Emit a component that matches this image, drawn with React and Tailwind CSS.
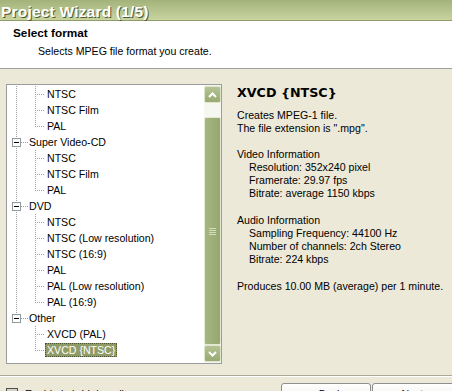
import React from "react";

const rows = [
  { t: "NTSC", kind: "child", root: "full", last: false },
  { t: "NTSC Film", kind: "child", root: "full", last: false },
  { t: "PAL", kind: "child", root: "full", last: true },
  { t: "Super Video-CD", kind: "parent", last: false },
  { t: "NTSC", kind: "child", root: "full", last: false },
  { t: "NTSC Film", kind: "child", root: "full", last: false },
  { t: "PAL", kind: "child", root: "full", last: true },
  { t: "DVD", kind: "parent", last: false },
  { t: "NTSC", kind: "child", root: "full", last: false },
  { t: "NTSC (Low resolution)", kind: "child", root: "full", last: false },
  { t: "NTSC (16:9)", kind: "child", root: "full", last: false },
  { t: "PAL", kind: "child", root: "full", last: false },
  { t: "PAL (Low resolution)", kind: "child", root: "full", last: false },
  { t: "PAL (16:9)", kind: "child", root: "full", last: true },
  { t: "Other", kind: "parent", last: true },
  { t: "XVCD (PAL)", kind: "child", root: "none", last: false },
  { t: "XVCD {NTSC}", kind: "child", root: "none", last: true, sel: true },
];

const DOT = "#a0a0a0";

function ChildLines({ root, last }) {
  return (
    <svg width="38" height="16" className="shrink-0" shapeRendering="crispEdges">
      {root === "full" && (
        <line x1="9.5" y1="0" x2="9.5" y2="16" stroke={DOT} strokeDasharray="1 1" />
      )}
      <line x1="28.5" y1="0" x2="28.5" y2={last ? 9 : 16} stroke={DOT} strokeDasharray="1 1" />
      <line x1="30" y1="8.5" x2="38" y2="8.5" stroke={DOT} strokeDasharray="1 1" />
    </svg>
  );
}

function ParentLines({ last }) {
  return (
    <svg width="21" height="16" className="shrink-0" shapeRendering="crispEdges">
      <line x1="9.5" y1="0" x2="9.5" y2={last ? 4 : 16} stroke={DOT} strokeDasharray="1 1" />
      <line x1="14" y1="8.5" x2="21" y2="8.5" stroke={DOT} strokeDasharray="1 1" />
      <rect x="5.5" y="4.5" width="8" height="8" fill="#fff" stroke="#8f9a9c" />
      <line x1="7" y1="8.5" x2="12" y2="8.5" stroke="#000" />
    </svg>
  );
}

function Chevron({ up }) {
  return (
    <svg width="9" height="6" viewBox="0 0 9 6">
      <polyline
        points={up ? "1,5 4.5,1.5 8,5" : "1,1 4.5,4.5 8,1"}
        fill="none"
        stroke="#fff"
        strokeWidth="2"
      />
    </svg>
  );
}

function ScrollButton({ up }) {
  return (
    <div className="h-[17px] w-[17px] shrink-0 rounded-[2px] border border-[#dfe6cc] bg-gradient-to-b from-[#b4c393] to-[#98aa72] flex items-center justify-center">
      <Chevron up={up} />
    </div>
  );
}

export default function App() {
  return (
    <div
      className="w-[452px] h-[391px] overflow-hidden bg-[#ece9d8] text-black flex flex-col"
      style={{ fontFamily: '"Liberation Sans", Arial, sans-serif' }}
    >
      {/* Title bar */}
      <div className="h-[21px] shrink-0 border-b border-[#8e9e66] bg-gradient-to-b from-[#a3b27a] to-[#c9d4a1] pl-[1px]">
        <span className="text-[15.5px] font-bold leading-[20px] tracking-[0.2px] text-white [text-shadow:1px_1px_0_#4f5d32]">
          Project Wizard (1/5)
        </span>
      </div>

      {/* Header */}
      <div className="h-[48px] shrink-0 bg-white border-b border-[#a0a0a0] pl-[13px] pt-[5px]">
        <div className="text-[11.8px] font-bold leading-[14px]">Select format</div>
        <div className="mt-[5px] pl-[25px] text-[10.6px] leading-[13px]">
          Selects MPEG file format you create.
        </div>
      </div>

      {/* Body */}
      <div className="h-[306px] shrink-0 flex">
        {/* Tree list */}
        <div className="ml-[6px] mt-[15px] w-[216px] h-[280px] border border-[#9c9c9c] bg-white flex">
          <div className="flex-1 overflow-hidden pt-[1px] text-[10.6px]">
            {rows.map((r, i) => (
              <div key={i} className="h-[16px] flex items-center">
                {r.kind === "child" ? (
                  <>
                    <ChildLines root={r.root} last={r.last} />
                    <span
                      className={
                        r.sel
                          ? "px-[2px] h-[14px] leading-[14px] bg-[#8f9c68] text-white outline outline-1 outline-dotted outline-[#4a5530] -outline-offset-1"
                          : "px-[2px] h-[14px] leading-[14px]"
                      }
                    >
                      {r.t}
                    </span>
                  </>
                ) : (
                  <>
                    <ParentLines last={r.last} />
                    <span className="pl-[1px] leading-[14px]">{r.t}</span>
                  </>
                )}
              </div>
            ))}
          </div>
          {/* Scrollbar */}
          <div className="w-[17px] shrink-0 py-[1px] flex flex-col bg-[#f4f5ee]">
            <ScrollButton up />
            <div className="h-[14px] shrink-0 bg-[#f6f7f1]" />
            <div className="h-[228px] shrink-0 rounded-[2px] border border-[#e3e9d2] bg-gradient-to-r from-[#a6b682] via-[#9eaf79] to-[#95a76f] flex flex-col items-center justify-center gap-[1px]">
              <div className="w-[7px] h-[1px] bg-[#d2dcba]" />
              <div className="w-[7px] h-[1px] bg-[#d2dcba]" />
              <div className="w-[7px] h-[1px] bg-[#d2dcba]" />
              <div className="w-[7px] h-[1px] bg-[#d2dcba]" />
            </div>
            <div className="flex-1" />
            <ScrollButton />
          </div>
        </div>

        {/* Info panel */}
        <div className="ml-[15px] flex flex-col text-[10.6px] leading-[13px]">
          <div
            className="mt-[16px] text-[12.7px] font-bold leading-[16px]"
            style={{ fontFamily: '"DejaVu Sans", Verdana, sans-serif' }}
          >
            XVCD {"{NTSC}"}
          </div>
          <div className="mt-[8px]">
            <div>Creates MPEG-1 file.</div>
            <div>The file extension is ".mpg".</div>
          </div>
          <div className="mt-[13px]">
            <div>Video Information</div>
            <div className="pl-[12px]">Resolution: 352x240 pixel</div>
            <div className="pl-[12px]">Framerate: 29.97 fps</div>
            <div className="pl-[12px]">Bitrate: average 1150 kbps</div>
          </div>
          <div className="mt-[14px]">
            <div>Audio Information</div>
            <div className="pl-[12px]">Sampling Frequency: 44100 Hz</div>
            <div className="pl-[12px]">Number of channels: 2ch Stereo</div>
            <div className="pl-[12px]">Bitrate: 224 kbps</div>
          </div>
          <div className="mt-[14px]">Produces 10.00 MB (average) per 1 minute.</div>
        </div>
      </div>

      {/* Separator */}
      <div className="h-[1px] shrink-0 bg-[#aca899]" />
      <div className="h-[1px] shrink-0 bg-white" />

      {/* Bottom row */}
      <div className="flex items-start text-[10.6px]">
        <div className="ml-[6px] mt-[11px] flex items-start">
          <div className="w-[12px] h-[12px] border border-[#4f4f4f] bg-[#d6d3c4]" />
          <span className="ml-[7px] leading-[13px]">Enable hybrid decoding</span>
        </div>
        <div className="ml-auto mt-[6px] flex">
          <div className="w-[90px] h-[23px] rounded-[3px] border border-[#8e8f8f] bg-gradient-to-b from-white to-[#ecebe6] flex items-start justify-center pt-[4px] leading-[13px]">
            &lt; Back
          </div>
          <div className="ml-[1px] w-[90px] h-[23px] rounded-[3px] border border-[#8e8f8f] bg-gradient-to-b from-white to-[#ecebe6] flex items-start justify-center pt-[4px] leading-[13px] mr-[-10px]">
            Next &gt;
          </div>
        </div>
      </div>
    </div>
  );
}
